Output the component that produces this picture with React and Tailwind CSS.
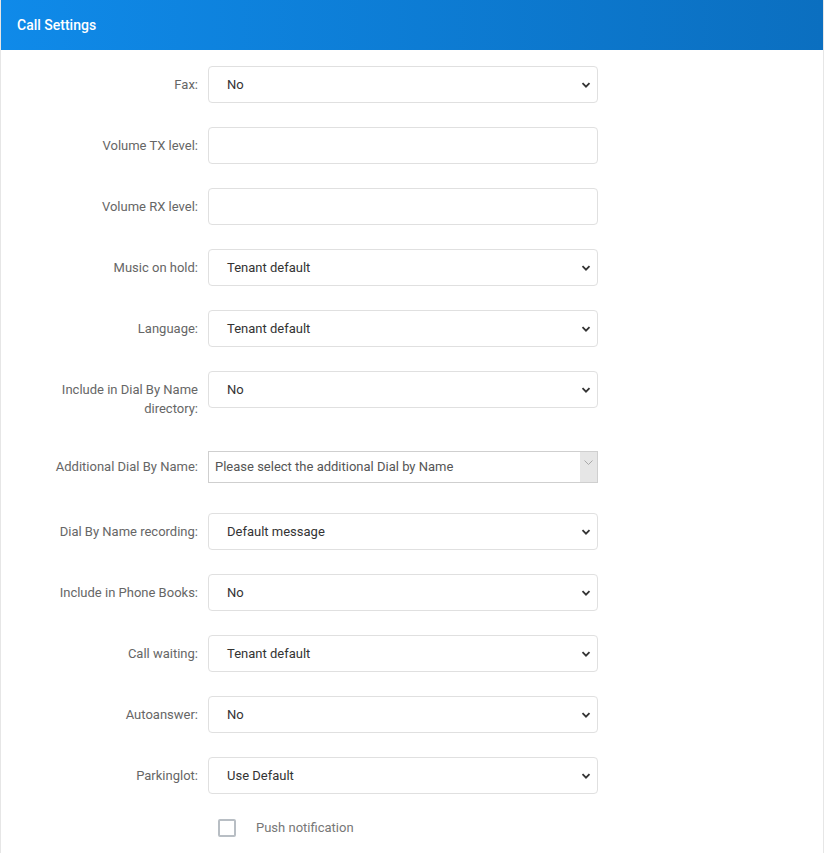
import React from "react";

const Chevron = () => (
  <svg width="10" height="10" viewBox="0 0 10 10" className="absolute right-[6px] top-1/2 -translate-y-1/2">
    <path d="M1.5 3.2 L5 6.7 L8.5 3.2" fill="none" stroke="#333" strokeWidth="1.8" />
  </svg>
);

const Sel = ({ v }) => (
  <div className="relative w-[390px] h-[37px] border border-[#e0e0e0] rounded-[4px] bg-white flex items-center pl-[18px] text-[13px] text-[#333]">
    {v}
    {v !== null && <Chevron />}
  </div>
);

const Inp = () => <div className="w-[390px] h-[37px] border border-[#e0e0e0] rounded-[4px] bg-white" />;

const Row = ({ label, children, mb = "mb-[24px]" }) => (
  <div className={`flex items-center ${mb}`}>
    <div className="w-[207px] pr-[10px] text-right text-[13px] text-[#666]">{label}</div>
    {children}
  </div>
);

export default function App() {
  return (
    <div className="w-[824px] h-[853px] bg-white border-x border-[#e6e6e6]" style={{ fontFamily: "Roboto, 'Liberation Sans', sans-serif" }}>
      <div className="h-[50px] bg-gradient-to-r from-[#0f8ae9] to-[#0b6fc0] flex items-center pl-[16px] text-white text-[14px] font-medium">
        Call Settings
      </div>
      <div className="pt-[16px]">
        <Row label="Fax:"><Sel v="No" /></Row>
        <Row label="Volume TX level:"><Inp /></Row>
        <Row label="Volume RX level:"><Inp /></Row>
        <Row label="Music on hold:"><Sel v="Tenant default" /></Row>
        <Row label="Language:"><Sel v="Tenant default" /></Row>
        <div className="flex items-start mb-[33px]">
          <div className="w-[207px] pr-[10px] pt-[9px] text-right text-[13px] leading-[19px] text-[#666]">
            Include in Dial By Name<br />directory:
          </div>
          <Sel v="No" />
        </div>
        <Row label="Additional Dial By Name:" mb="mb-[30px]">
          <div className="relative w-[390px] h-[32px] border border-[#cfcfcf] bg-white flex items-center pl-[6px] text-[13px] text-[#555]">
            Please select the additional Dial by Name
            <div className="absolute right-0 top-0 bottom-0 w-[17px] bg-[#e6e6e6] flex items-start justify-center pt-[8px]">
              <svg width="9" height="6" viewBox="0 0 9 6"><path d="M0.5 0.5 L4.5 4.5 L8.5 0.5" fill="none" stroke="#999" strokeWidth="0.8" /></svg>
            </div>
          </div>
        </Row>
        <Row label="Dial By Name recording:"><Sel v="Default message" /></Row>
        <Row label="Include in Phone Books:"><Sel v="No" /></Row>
        <Row label="Call waiting:"><Sel v="Tenant default" /></Row>
        <Row label="Autoanswer:"><Sel v="No" /></Row>
        <Row label="Parkinglot:"><Sel v="Use Default" /></Row>
        <div className="flex items-center pl-[217px]">
          <div className="w-[18px] h-[18px] border-2 border-[#b8bec4] rounded-[2px]" />
          <span className="ml-[20px] text-[13px] text-[#777]">Push notification</span>
        </div>
      </div>
    </div>
  );
}
